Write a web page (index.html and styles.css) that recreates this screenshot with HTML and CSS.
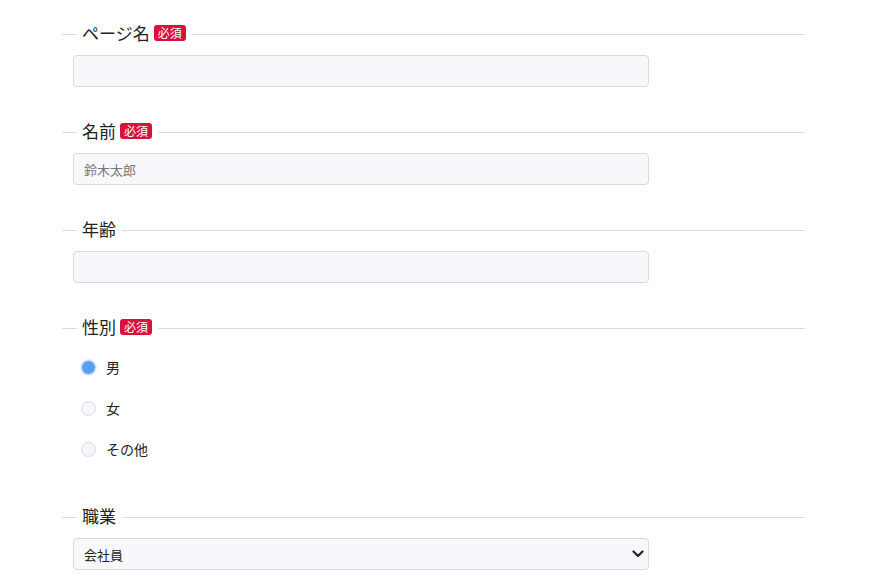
FILE: index.html
```html
<!DOCTYPE html>
<html lang="ja">
<head>
    <meta charset="UTF-8">
    <meta name="viewport" content="width=device-width, initial-scale=1.0">
    <title>フォーム</title>
    <link rel="stylesheet" href="styles.css">
</head>
<body>

<form class="form">
    <fieldset class="field">
        <legend>ページ名<span class="required">必須</span></legend>
        <input type="text" class="text-input">
    </fieldset>

    <fieldset class="field">
        <legend>名前<span class="required">必須</span></legend>
        <input type="text" class="text-input" placeholder="鈴木太郎">
    </fieldset>

    <fieldset class="field">
        <legend>年齢</legend>
        <input type="text" class="text-input">
    </fieldset>

    <fieldset class="field">
        <legend>性別<span class="required">必須</span></legend>
        <div class="radios">
            <label class="radio"><input type="radio" name="sex" checked>男</label>
            <label class="radio"><input type="radio" name="sex">女</label>
            <label class="radio"><input type="radio" name="sex">その他</label>
        </div>
    </fieldset>

    <fieldset class="field">
        <legend>職業</legend>
        <div class="select-wrap">
            <select class="select">
                <option>会社員</option>
                <option>自営業</option>
                <option>学生</option>
                <option>その他</option>
            </select>
            <svg class="chevron" width="12" height="8" viewBox="0 0 12 8"><path d="M1.5 1.5 6 6l4.5-4.5" fill="none" stroke="#222" stroke-width="2.2" stroke-linecap="round" stroke-linejoin="round"/></svg>
        </div>
    </fieldset>
</form>

</body>
</html>
```

FILE: styles.css
```css
body {
    margin: 0;
    background-color: #fff;
    font-family: "Noto Sans CJK JP", "Noto Sans", sans-serif;
    color: #222;
}
.form {
    width: 743px;
    margin-left: 62px;
    padding-top: 21px;
}
.field {
    border: none;
    border-top: 1px solid #dcdcde;
    margin: 0 0 32px 0;
    padding: 0 0 0 11px;
}
.field legend {
    margin-left: 4px;
    padding: 0 6px 2px 5px;
    font-size: 17px;
    line-height: 24px;
    color: #222;
}
.required {
    display: inline-block;
    margin-left: 4px;
    padding: 0 4px;
    background-color: #d6123d;
    color: #fff;
    font-size: 12px;
    line-height: 16px;
    border-radius: 3px;
    vertical-align: 2px;
}
.text-input,
.select {
    display: block;
    box-sizing: border-box;
    width: 576px;
    height: 32px;
    margin-top: 8px;
    padding: 0 10px;
    background-color: #f8f8fc;
    border: 1px solid #d9d9de;
    border-radius: 4px;
    font-family: inherit;
    font-size: 13px;
    color: #222;
}
.text-input::placeholder {
    color: #777;
}
.radios {
    display: flex;
    flex-direction: column;
    gap: 23px;
    padding: 17px 0 14px 8px;
}
.radio {
    display: flex;
    align-items: center;
    gap: 10px;
    font-size: 14px;
    line-height: 18px;
}
.radio input {
    appearance: none;
    width: 15px;
    height: 15px;
    margin: 0;
    border: 1px solid #dadde8;
    border-radius: 50%;
    background-color: #f5f6fb;
}
.radio input:checked {
    background-color: #5b9ff5;
    border-color: #cfe2fc;
    box-shadow: 0 0 0 1px #e4eefd;
}
.select-wrap {
    position: relative;
    width: 576px;
}
.select {
    appearance: none;
}
.chevron {
    position: absolute;
    right: 5px;
    top: 12px;
}
```
